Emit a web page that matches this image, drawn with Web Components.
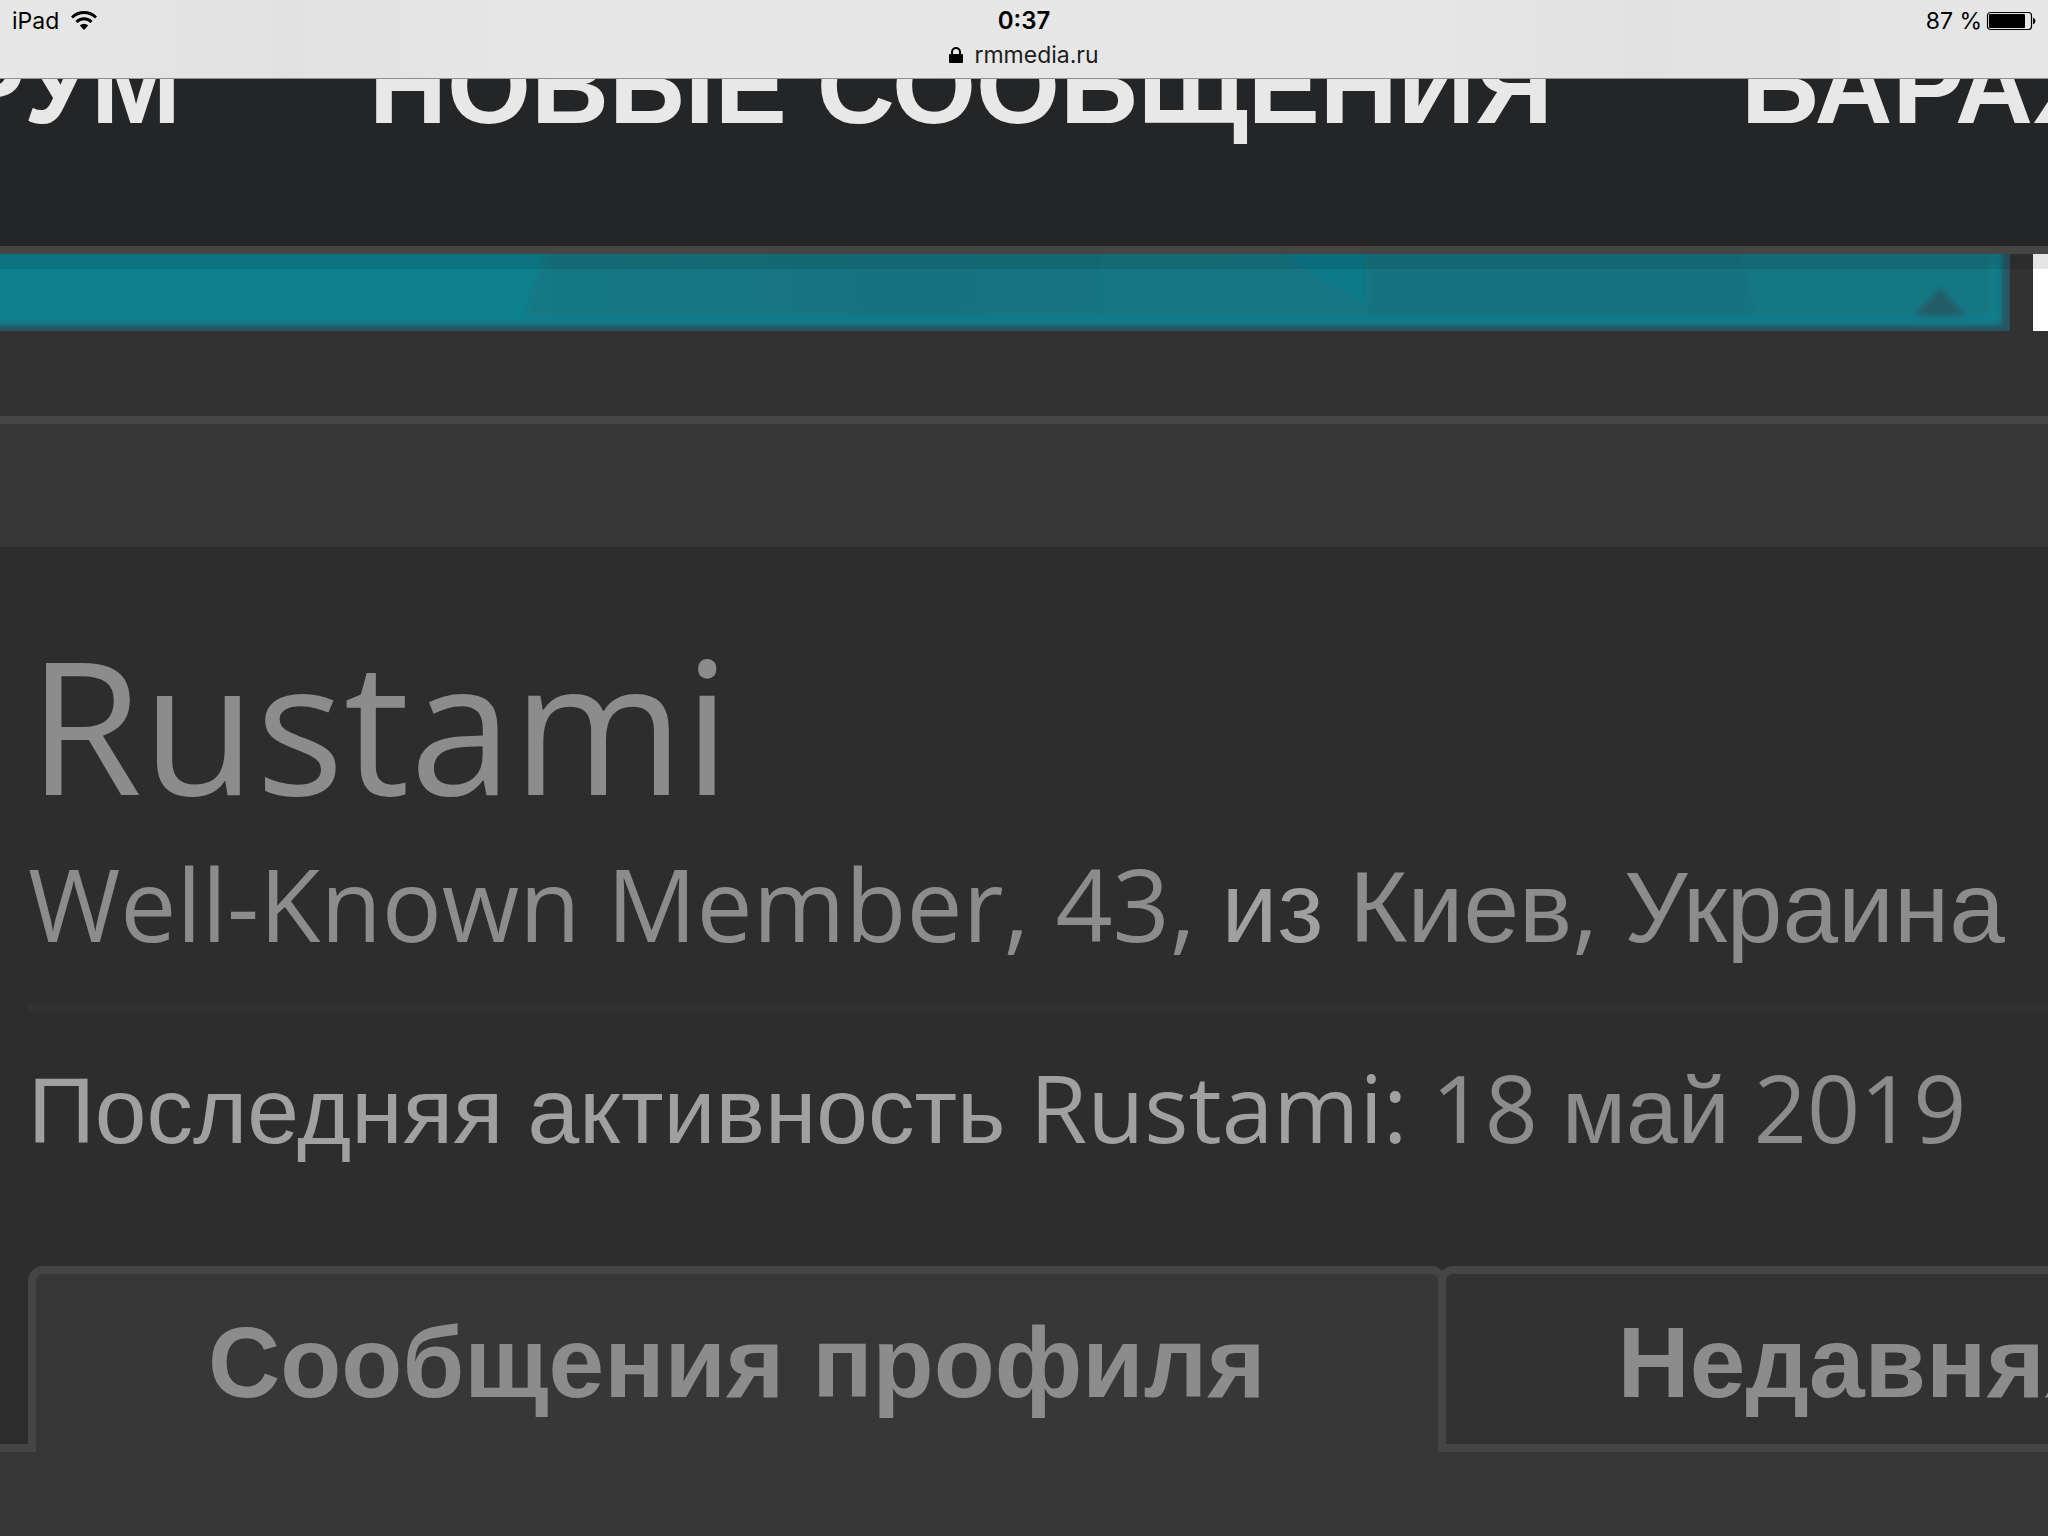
<!DOCTYPE html>
<html lang="ru">
<head>
<meta charset="utf-8">
<title>Rustami | rmmedia.ru</title>
<style>
html, body { margin: 0; height: 100%; background: #373737; }
body { font-family: "Liberation Sans", Arial, sans-serif; overflow: hidden; }
</style>
</head>
<body>
<status-bar></status-bar>
<site-nav>
  <nav-link href="#forum">ФОРУМ</nav-link>
  <nav-link href="#new">НОВЫЕ СООБЩЕНИЯ</nav-link>
  <nav-link href="#market">БАРАХОЛКА</nav-link>
</site-nav>
<promo-strip></promo-strip>
<crumb-bar></crumb-bar>
<member-profile></member-profile>
<profile-tabs>
  <profile-tab active>Сообщения профиля</profile-tab>
  <profile-tab>Недавняя активность</profile-tab>
</profile-tabs>

<script>
const define = (name, html) => {
  const template = document.createElement('template');
  template.innerHTML = html;
  customElements.define(name, class extends HTMLElement {
    constructor() {
      super();
      this.attachShadow({ mode: 'open' }).append(template.content.cloneNode(true));
    }
    connectedCallback() {
      const link = this.shadowRoot.querySelector('a.link');
      if (link) link.href = this.getAttribute('href') || '#';
      const tab = this.shadowRoot.querySelector('[role=tab]');
      if (tab) tab.setAttribute('aria-selected', this.hasAttribute('active'));
    }
  });
};

define('status-bar', `
<style>
:host { display: grid; grid-template-columns: 1fr auto 1fr; align-items: start; height: 79px; box-sizing: border-box; padding: 0 12px;
  border-bottom: 1px solid #8f8f8f; background: linear-gradient(90deg, #e7e7e7, #e2e2e2 14%, #e7e7e7 28%, #e6e6e6 70%, #e2e2e2 80%, #e6e6e6); color: #000;
  font: 23px/28px Inter, "Liberation Sans", sans-serif; }
.left, .right, .host { display: flex; align-items: center; }
.left, .right { height: 41px; }
.left { gap: 12px; }
.right { justify-content: flex-end; gap: 4px; }
.middle { display: grid; grid-template-rows: 41px 28px; justify-items: center; align-items: center; }
.time { font-weight: 600; font-size: 24px; }
.host { gap: 11px; color: #1c1c1c; text-decoration: none; }
svg { display: block; }
</style>
<div class="left"><span>iPad</span>
<svg width="26" height="20" viewBox="0 0 26 20"><path d="M1 6.500A17 17 0 0 1 25 6.500" fill="none" stroke="#000" stroke-width="3"/><path d="M5.500 11A10.500 10.500 0 0 1 20.500 11" fill="none" stroke="#000" stroke-width="3"/><path d="M8.800 14.500A6 6 0 0 1 17.200 14.500L13 19Z"/></svg></div>
<div class="middle"><span class="time">0:37</span>
<a class="host" href="#"><svg width="14" height="16" viewBox="0 0 14 16"><rect x="0" y="7" width="14" height="9" rx="1"/><path d="M3 8V5a4 4 0 0 1 8 0v3" fill="none" stroke="#000" stroke-width="2"/></svg><span>rmmedia.ru</span></a></div>
<div class="right"><span>87 %</span>
<svg width="50" height="20" viewBox="0 0 50 20"><rect x="1.500" y="1.500" width="44" height="17" rx="3" fill="none" stroke="#000" stroke-width="1.200"/><rect x="3" y="3" width="36" height="14" rx="1"/><path d="M47 6.500q2.500 1 2.500 3.500t-2.500 3.500z"/></svg></div>`);

define('nav-link', `
<style>
:host { display: block; }
a { display: block; padding: 0 94px; color: #e8e8e8; text-decoration: none; white-space: nowrap; font: bold 108px/108px "Liberation Sans", Arial, sans-serif; }
</style>
<a class="link"><slot></slot></a>`);

define('site-nav', `
<style>
:host { display: block; position: relative; z-index: 1; background: #242527; border-bottom: 8px solid #454545; box-shadow: 0 15px 0 rgba(0,0,0,.1); }
nav { display: flex; align-items: flex-end; height: 167px; box-sizing: border-box; padding-bottom: 106px; overflow: hidden; }
.row { display: flex; margin-left: -317px; }
</style>
<nav><div class="row"><slot></slot></div></nav>`);

define('promo-strip', `
<style>
:host { display: flex; height: 77px; gap: 23px; background: #323232; padding-bottom: 85px; }
svg { flex: 1; min-width: 0; height: 77px; display: block; }
.next { width: 15px; background: #fff; }
</style>
<svg viewBox="0 0 2010 77" preserveAspectRatio="none" aria-hidden="true">
<defs><filter id="soft" x="-5%" y="-20%" width="110%" height="140%"><feGaussianBlur stdDeviation="3"/></filter>
<linearGradient id="veil" x2="1" y2="0"><stop offset="0" stop-color="#127885"/><stop offset=".25" stop-color="#147280"/><stop offset=".5" stop-color="#137583"/></linearGradient></defs>
<rect width="2010" height="77" fill="#2b5260"/>
<g filter="url(#soft)">
<rect x="-20" y="-20" width="2022" height="91" fill="#0c808f"/>
<path d="M554-20Q534 24 525 63H1994V-20Z" fill="url(#veil)"/>
<path d="M1270-6H1366V52Z" fill="#0e7a89"/>
<path d="M1367-20H1730Q1752 20 1755 63H1367Z" fill="#157280"/>
<path d="M1730-20Q1752 20 1755 63H1994V-20Z" fill="#127784"/>
<path d="M1940 34L1968 63H1912Z" fill="#225c68"/>
</g>
</svg><div class="next"></div>`);

define('crumb-bar', `
<style>:host { display: block; height: 123px; background: #373737; border-top: 8px solid #454545; }</style>`);

define('member-profile', `
<style>
:host { display: block; background: #2d2d2d; padding: 83px 0 0 28px; font-family: "Open Sans", sans-serif; color: #8c8c8c; white-space: nowrap; }
.cy { font-family: "Liberation Sans", Arial, sans-serif; }
h1 { margin: 0; font-size: 185px; line-height: 186px; font-weight: 400; }
.blurb { margin: 0; font-size: 100px; line-height: 132px; padding: 21px 0 30px; border-bottom: 8px solid #313131; }
.last { margin: 0; font-size: 93px; line-height: 120px; padding: 36px 0 95px; }
.light { color: #a0a0a0; }
a { color: inherit; text-decoration: none; }
</style>
<h1>Rustami</h1>
<p class="blurb">Well-Known Member, 43, <span class="light cy">из</span> <a href="#map"><span class="cy">Киев</span>, <span class="cy">Украина</span></a></p>
<p class="last"><span class="light"><span class="cy">Последняя</span> <span class="cy">активность</span> Rustami:</span> 18 <span class="cy">май</span> 2019</p>`);

define('profile-tab', `
<style>
:host { display: block; flex: none; margin-right: -8px; }
button { display: block; box-sizing: border-box; height: 186px; margin: 0; padding: 6px 172px 0; border: 8px solid #454545; border-radius: 15px 15px 0 0; background: #323232; color: #8c8c8c; font: bold 100px/120px "Liberation Sans", Arial, sans-serif; white-space: nowrap; }
:host([active]) button { background: #373737; border-bottom: 0; padding-bottom: 8px; }
</style>
<button role="tab"><slot></slot></button>`);

define('profile-tabs', `
<style>
:host { display: block; background: linear-gradient(#2d2d2d 178px, #454545 178px, #454545 186px, #373737 186px); overflow: hidden; }
div { display: flex; padding-left: 28px; }
</style>
<div role="tablist"><slot></slot></div>`);
</script>
</body>
</html>
